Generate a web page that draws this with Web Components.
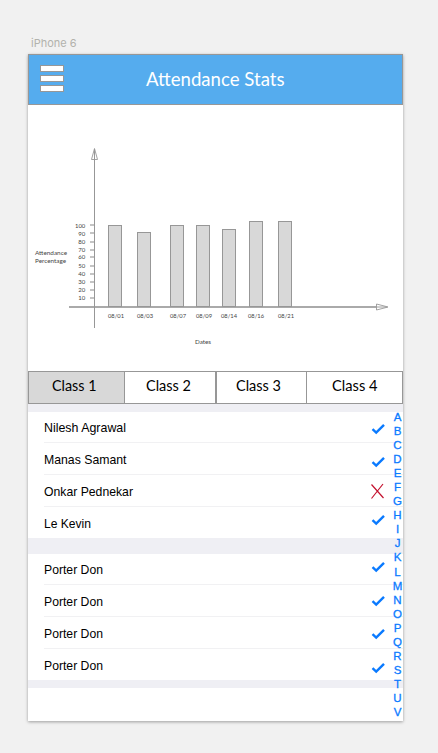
<!DOCTYPE html>
<html lang="en">
<head>
<meta charset="utf-8">
<title>Attendance Stats</title>
<style>
html,body{margin:0;height:100%;background:#f1f1f1;overflow:hidden}
</style>
</head>
<body>
<attendance-screen></attendance-screen>
<script>
const define=(name,html,setup)=>customElements.define(name,class extends HTMLElement{
  connectedCallback(){
    if(this.shadowRoot)return;
    this.attachShadow({mode:'open'}).innerHTML=html;
    if(setup)setup(this,this.shadowRoot);
  }
});

/* Single line of text spread to an exact width; line box is 16px with a common baseline. */
define('fit-text',`<style>:host{display:block;white-space:nowrap;line-height:16px;height:16px}svg{display:block;overflow:visible;height:16px;width:100%}text{fill:currentColor}</style><svg><text y="12" lengthAdjust="spacingAndGlyphs"></text></svg>`,(el,r)=>{
  const t=r.querySelector('text');
  t.textContent=el.getAttribute('text');
  t.setAttribute('textLength',el.getAttribute('w'));
  el.style.width=el.getAttribute('w')+'px';
});

define('nav-header',`<style>
:host{display:flex;box-sizing:border-box;height:51px;background:#55acee;border:1px solid #979797;padding:10px 0 0 11px;color:#fff;font:18.500px Lato,sans-serif}
.menu{display:flex;flex-direction:column;gap:3px;width:24px}
.menu i{box-sizing:border-box;height:7px;border:1px solid #979797;background:#fff}
fit-text{margin:9px 0 0 82px}
</style><div class="menu"><i></i><i></i><i></i></div><fit-text text="Attendance Stats" w="138.500"></fit-text>`);

define('attendance-chart',`<style>:host{display:block;height:266px}svg{display:block}text{font:6.200px Lato,sans-serif;fill:#444}</style>
<svg width="375" height="266" viewBox="28 105 375 266"><g id="g"></g></svg>`,(el,r)=>{
  let s='<path d="M69 307H376" stroke="#aaa" stroke-width="2"/>';
  [[108,225],[137,232],[170,225],[196,225],[222,229],[249,221],[278,221]].forEach(([x,y])=>
    s+=`<rect x="${x+.5}" y="${y+.5}" width="13" height="${306-y}" fill="#d8d8d8" stroke="#979797"/>`);
  s+='<path d="M94.5 149V328" stroke="#979797"/><path d="M94.5 148.500L91.500 159.500H97.500Z M376.500 304V310L388 307Z M376 307H387" fill="none" stroke="#979797" stroke-width=".9"/>';
  [225,233,242,250,257,266,274,282,290,298].forEach((y,i)=>{
    const w=i?7:10.3;
    s+=`<path d="M90 ${y}H94" stroke="#c4c4c4" stroke-width="2"/><text x="${85.300-w}" y="${(i==0||i==1?y+1:y)+2}" textLength="${w}" lengthAdjust="spacingAndGlyphs">${100-i*10}</text>`;
  });
  [[108,'01'],[137,'03'],[170,'07'],[196,'09'],[221,'14'],[248,'16'],[278,'21']].forEach(([x,d])=>
    s+=`<text x="${x}" y="318" textLength="16" lengthAdjust="spacingAndGlyphs">08/${d}</text>`);
  [[35,255,'Attendance',32],[35,263,'Percentage',31],[195,344,'Dates',16]].forEach(([x,y,t,w])=>
    s+=`<text x="${x}" y="${y}" textLength="${w}" lengthAdjust="spacingAndGlyphs">${t}</text>`);
  r.getElementById('g').innerHTML=s;
});

define('class-tabs',`<style>
:host{display:grid;grid-template-columns:97px 91px 91px 96px;height:33px;font:14.500px Lato,sans-serif;color:#000}
div{box-sizing:border-box;border:1px solid #979797;background:#fff;padding-top:7px}
.on{background:#d8d8d8}
.b,.d{border-left:0}
</style>
<div class="on" style="padding-left:23px"><fit-text text="Class 1" w="44.500"></fit-text></div>
<div class="b" style="padding-left:21px"><fit-text text="Class 2" w="45"></fit-text></div>
<div style="padding-left:19px"><fit-text text="Class 3" w="45"></fit-text></div>
<div class="d" style="padding-left:25px"><fit-text text="Class 4" w="45.500"></fit-text></div>`);

define('student-row',`<style>
:host{display:flex;box-sizing:border-box;height:32px;border-top:1px solid #f1f1f3;margin-left:16px;font:12.400px "Liberation Sans",Arial,sans-serif;color:#000;padding-top:9px}
:host([first]){height:30px;border:0;padding-top:8px}
.mark{margin-left:auto;margin-right:18px;width:14px;height:0}
svg{display:block;overflow:visible}
</style><span id="n"></span><span class="mark"></span>`,(el,r)=>{
  r.getElementById('n').innerHTML=`<fit-text text="${el.getAttribute('name')}" w="${el.getAttribute('w')}"></fit-text>`;
  const pad=el.hasAttribute('first')?8:10, m=r.querySelector('.mark');
  m.style.marginTop=(+el.getAttribute('top')-pad)+'px';
  m.innerHTML=el.hasAttribute('absent')
    ?'<svg width="14" height="15"><path d="M.5 .5L12.500 14M12 0L.5 14.500" stroke="#c4122f" stroke-width="1.200" fill="none"/></svg>'
    :'<svg width="14" height="11"><path d="M1.500 5.200L5.200 8.700L13 .9" stroke="#0a7aff" stroke-width="2.400" fill="none"/></svg>';
});

define('student-group',`<style>:host{display:block;background:#fff}</style><slot></slot>`);

define('alphabet-index',`<style>
:host{position:absolute;right:-1.500px;top:356px;width:14px;display:flex;flex-direction:column;align-items:center;color:#0a7aff;font:11.500px "Liberation Sans",Arial,sans-serif;-webkit-text-stroke:.3px #0a7aff}
span{height:14.050px;line-height:14.050px}
</style>`,(el,r)=>{ for(const c of 'ABCDEFGHIJKLMNOPQRSTUV'){const s=document.createElement('span');s.textContent=c;r.append(s)} });

define('attendance-screen',`<style>
:host{display:block;padding:35px 0 0 28px}
.label{color:#b2b2ac;font:11px Inter,sans-serif;padding-left:3px;height:19px}
.board{position:relative;width:375px;height:667px;background:#fff;box-shadow:0 1px 3px rgba(0,0,0,.35)}
.gap{background:#efeff4;height:8px}.gap.big{height:16px}
</style>
<div class="label"><fit-text text="iPhone 6" w="45.500"></fit-text></div>
<main class="board">
<nav-header></nav-header>
<attendance-chart></attendance-chart>
<class-tabs></class-tabs>
<div class="gap"></div>
<student-group>
<student-row first name="Nilesh Agrawal" w="82" top="12"></student-row>
<student-row name="Manas Samant" w="82.500" top="15"></student-row>
<student-row absent name="Onkar Pednekar" w="89" top="9.500"></student-row>
<student-row name="Le Kevin" w="47" top="9"></student-row>
</student-group>
<div class="gap big"></div>
<student-group>
<student-row first name="Porter Don" w="59" top="8"></student-row>
<student-row name="Porter Don" w="59" top="12"></student-row>
<student-row name="Porter Don" w="59" top="13"></student-row>
<student-row name="Porter Don" w="59" top="14.500"></student-row>
</student-group>
<div class="gap"></div>
<alphabet-index></alphabet-index>
</main>`);
</script>
</body>
</html>
